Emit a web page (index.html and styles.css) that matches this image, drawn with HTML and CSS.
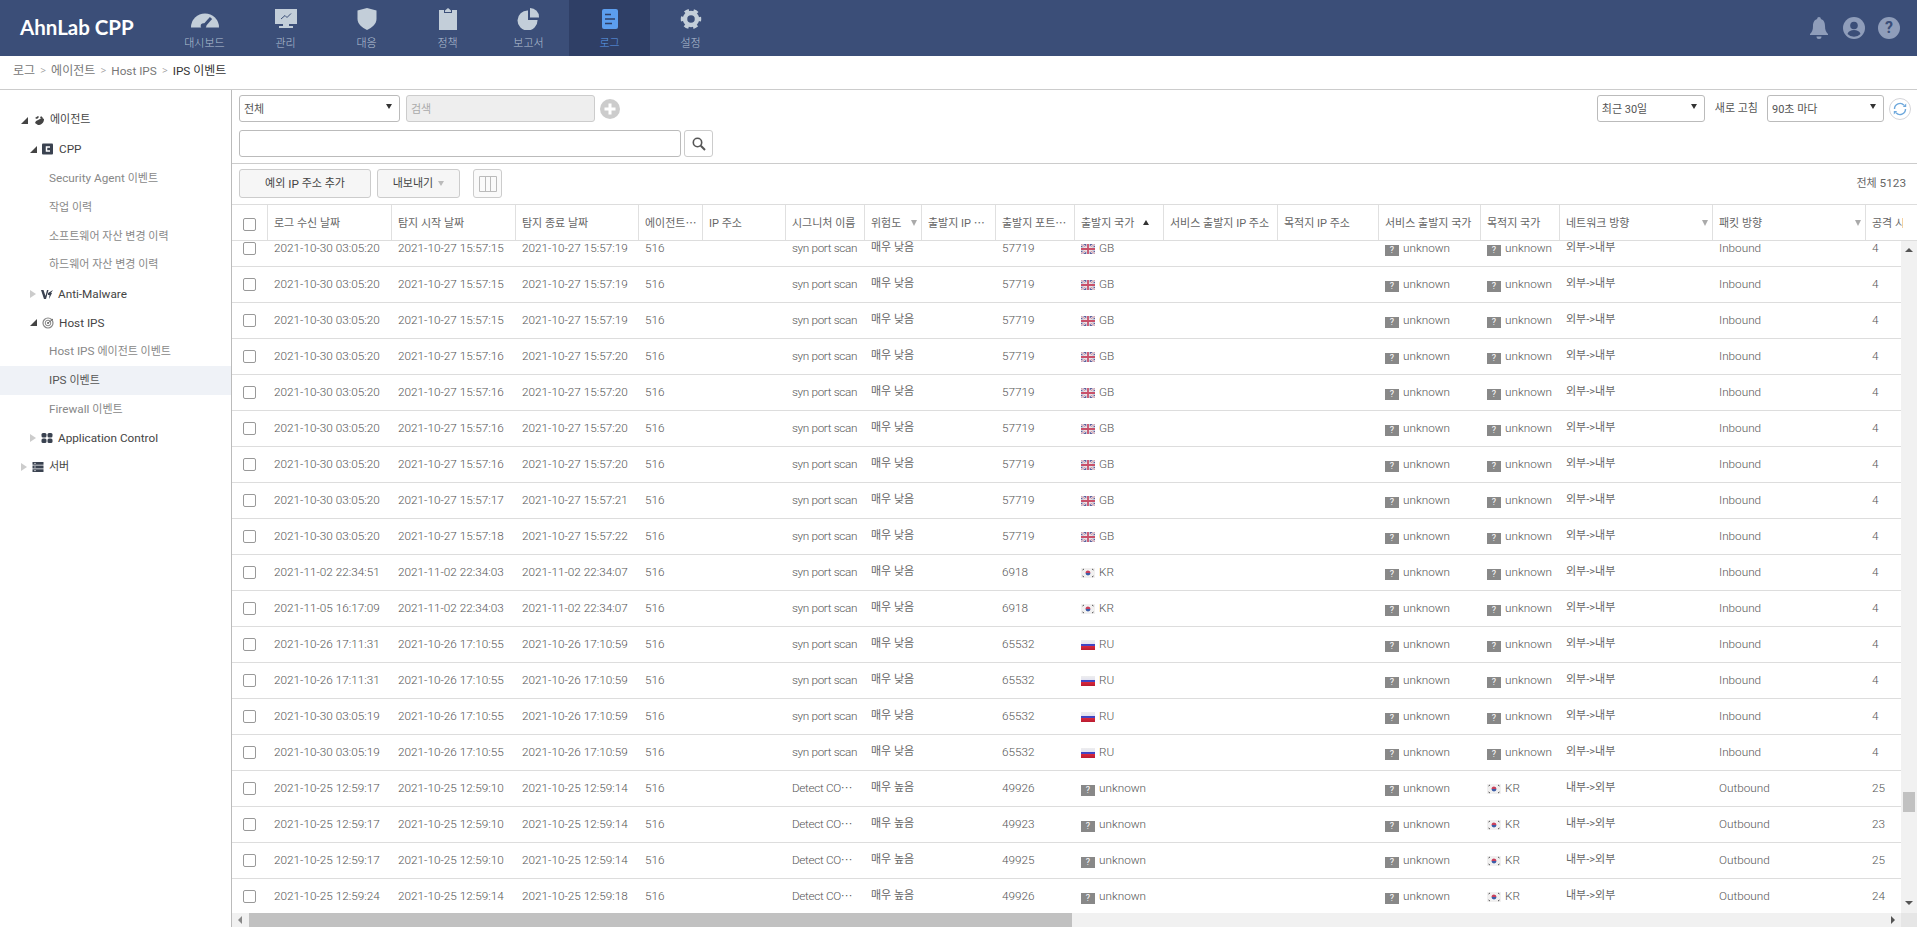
FILE: index.html
```html
<!DOCTYPE html>
<html lang="ko">
<head>
<meta charset="utf-8">
<title>AhnLab CPP</title>
<link rel="stylesheet" href="styles.css">
</head>
<body>
<svg class="defs" width="0" height="0">
<symbol id="gb" viewBox="0 0 14 10"><rect width="14" height="10" fill="#5a5f9c"/><path d="M0 0L14 10M14 0L0 10" stroke="#e6dfe6" stroke-width="2.4"/><path d="M0 0L14 10M14 0L0 10" stroke="#d08a98" stroke-width=".8"/><path d="M7 0V10M0 5H14" stroke="#eee" stroke-width="3.4"/><path d="M7 0V10M0 5H14" stroke="#c8506a" stroke-width="1.8"/></symbol>
<symbol id="kr" viewBox="0 0 14 10"><rect width="14" height="10" fill="#f1f0f0"/><path d="M4.500 5a2.500 2.500 0 0 1 5 0z" fill="#c9405c"/><path d="M4.500 5a2.500 2.500 0 0 0 5 0z" fill="#3c5da8"/><path d="M1.500 2L3 1M1.500 8L3 9M11 1L12.500 2M11 9L12.500 8" stroke="#555" stroke-width="1"/></symbol>
<linearGradient id="rug" x1="0" y1="0" x2="0" y2="1"><stop offset="0" stop-color="#eee"/><stop offset=".36" stop-color="#e4e4f0"/><stop offset=".37" stop-color="#3a42c0"/><stop offset=".63" stop-color="#4a4ac4"/><stop offset=".64" stop-color="#d8283c"/><stop offset="1" stop-color="#b81c30"/></linearGradient>
<symbol id="ru" viewBox="0 0 14 10"><rect width="14" height="10" fill="url(#rug)"/></symbol>
</svg>
<header class="top">
  <div class="logo">AhnLab CPP</div>
  <nav class="nav">
    <a class="nav-item"><svg class="nav-ic" viewBox="0 0 30 22"><path fill="#c3ced9" d="M1 19.500A14 14 0 0 1 29 19.500H8z"/><path d="M13 19L21 10" stroke="#3b4e78" stroke-width="3"/><circle cx="13.500" cy="18" r="2.800" fill="#3b4e78"/></svg><span>대시보드</span></a>
    <a class="nav-item"><svg class="nav-ic" viewBox="0 0 30 22"><path fill="#c3ced9" d="M4 1H26V16H18V18H22V20H8V18H12V16H4Z"/><path fill="none" stroke="#3b4e78" d="M10 11L14 7.500L16 9.500L20 5.500"/></svg><span>관리</span></a>
    <a class="nav-item"><svg class="nav-ic" viewBox="0 0 30 22"><path fill="#c3ced9" d="M15 0L24.500 2.500V11C24.500 16 20 19.500 15 22C10 19.500 5.500 16 5.500 11V2.500Z"/></svg><span>대응</span></a>
    <a class="nav-item"><svg class="nav-ic" viewBox="0 0 30 22"><path fill="#c3ced9" d="M6 2H11V5H19V2H24V22H6Z"/><path fill="#c3ced9" d="M12 2.500L15 0L18 2.500V4H12Z"/></svg><span>정책</span></a>
    <a class="nav-item"><svg class="nav-ic" viewBox="0 0 30 22"><path fill="#c3ced9" d="M14 2.500V12H23.500A10 10 0 1 1 14 2.500Z"/><path fill="#c3ced9" d="M16 0A9 9 0 0 1 25 9.500H16Z"/></svg><span>보고서</span></a>
    <a class="nav-item on"><svg class="nav-ic" viewBox="0 0 30 22"><rect x="7" y="1" width="16" height="20" rx="2" fill="#5c9eef"/><path d="M10 6.500H16M10 11H20M10 15.500H17" stroke="#2f3f66" stroke-width="1.600"/></svg><span>로그</span></a>
    <a class="nav-item"><svg class="nav-ic" viewBox="0 0 30 22"><circle cx="15" cy="11" r="6" fill="none" stroke="#c3ced9" stroke-width="4.500"/><circle cx="15" cy="11" r="8.500" fill="none" stroke="#c3ced9" stroke-width="3.500" stroke-dasharray="4.400 4.500" stroke-dashoffset="2.200"/></svg><span>설정</span></a>
  </nav>
  <div class="top-ic">
    <svg viewBox="0 0 20 22"><path fill="#8f9dba" d="M10 0a1.800 1.800 0 0 1 1.800 2C15 3 16 6 16 9c0 4 1 6 3 8v1H1v-1c2-2 3-4 3-8 0-3 1-6 4.200-7A1.800 1.800 0 0 1 10 0ZM7.500 19.500h5a2.500 2.500 0 0 1-5 0Z"/></svg>
    <svg viewBox="0 0 22 22"><circle cx="11" cy="11" r="11" fill="#8f9dba"/><circle cx="11" cy="8.500" r="3.800" fill="#3b4e78"/><path fill="#3b4e78" d="M4.500 17c1-3 3.500-4 6.500-4s5.500 1 6.500 4a9 9 0 0 1-13 0Z"/></svg>
    <span class="help">?</span>
  </div>
</header>
<div class="crumb"><span class="ko">로그</span><i class="sep">&gt;</i><span class="ko">에이전트</span><i class="sep">&gt;</i><span>Host IPS</span><i class="sep">&gt;</i><b>IPS <span class="ko">이벤트</span></b></div>
<div class="content">
  <aside class="side">
    <div class="t l0"><i class="ar open"></i><svg class="ti" viewBox="0 0 12 12"><path d="M2 4l3-2 1 1-2 2zM8 2l2 2-1 1-2-1zM3 7l6-3 2 1c0 4-3 6-6 6L2 9z" fill="#444"/></svg><span class="ko dk">에이전트</span></div>
    <div class="t l1"><i class="ar open"></i><svg class="ti" viewBox="0 0 12 12"><rect width="11" height="11" y=".5" rx="1" fill="#3a4250"/><path d="M8 4H4.500v4H8" fill="none" stroke="#fff" stroke-width="1.500"/></svg><span class="dk">CPP</span></div>
    <div class="t leaf">Security Agent <span class="ko">이벤트</span></div>
    <div class="t leaf"><span class="ko">작업 이력</span></div>
    <div class="t leaf"><span class="ko">소프트웨어 자산 변경 이력</span></div>
    <div class="t leaf"><span class="ko">하드웨어 자산 변경 이력</span></div>
    <div class="t l1"><i class="ar"></i><svg class="ti" viewBox="0 0 12 12"><path d="M0 2h2.500L4.500 8 6 2h1.500L5 11H3zM7 5l5-3-2 3 1 0-3 6 .5-4H7z" fill="#3a4250"/></svg><span class="dk">Anti-Malware</span></div>
    <div class="t l1"><i class="ar open"></i><svg class="ti" viewBox="0 0 12 12"><circle cx="6" cy="6" r="5" fill="none" stroke="#888" stroke-width="1.200"/><circle cx="6" cy="6" r="2.800" fill="none" stroke="#888"/><circle cx="6" cy="6" r="1" fill="#666"/><path d="M6 6l5-4" stroke="#666"/></svg><span class="dk">Host IPS</span></div>
    <div class="t leaf">Host IPS <span class="ko">에이전트 이벤트</span></div>
    <div class="t leaf cur">IPS <span class="ko">이벤트</span></div>
    <div class="t leaf">Firewall <span class="ko">이벤트</span></div>
    <div class="t l1"><i class="ar"></i><svg class="ti" viewBox="0 0 12 12"><rect x=".5" y="1" width="5" height="4.500" rx="1.500" fill="#3a4250"/><rect x="6.500" y="1" width="5" height="4.500" rx="1.500" fill="#3a4250"/><rect x=".5" y="6.500" width="5" height="4.500" rx="1.500" fill="#3a4250"/><rect x="6.500" y="6.500" width="5" height="4.500" rx="1.500" fill="#3a4250"/></svg><span class="dk">Application Control</span></div>
    <div class="t l0"><i class="ar"></i><svg class="ti" viewBox="0 0 12 12"><path d="M.5 1h11v2.800H.5zM.5 4.600h11v2.800H.5zM.5 8.200h11V11H.5z" fill="#3a4250"/><path d="M2 2.400h2M2 6h2M2 9.600h2" stroke="#fff" stroke-width=".6"/></svg><span class="ko dk">서버</span></div>
  </aside>
  <main class="main">
    <section class="bar1">
      <div class="bar-row">
        <div class="sel w-all"><span class="ko">전체</span><i class="caret"></i></div>
        <div class="inp off"><span class="ko">검색</span></div>
        <span class="plus"><svg viewBox="0 0 20 20"><circle cx="10" cy="10" r="10" fill="#ccc"/><path d="M10 4.500v11M4.500 10h11" stroke="#fff" stroke-width="3"/></svg></span>
        <div class="right">
          <div class="sel w-days"><span class="ko">최근 30일</span><i class="caret"></i></div>
          <label class="lbl ko">새로 고침</label>
          <div class="sel w-int"><span class="ko">90초 마다</span><i class="caret"></i></div>
          <span class="refresh"><svg viewBox="0 0 22 22"><circle cx="11" cy="11" r="10.500" fill="#fff" stroke="#d4d4d8"/><path d="M5.500 11a5.500 5.500 0 0 1 9.500-3.800" fill="none" stroke="#6ea8dc" stroke-width="1.400"/><path d="M16.500 11a5.500 5.500 0 0 1-9.500 3.800" fill="none" stroke="#6ea8dc" stroke-width="1.400"/><path d="M13.800 9H17.200V5.600zM8.200 13H4.800V16.400z" fill="#6ea8dc"/></svg></span>
        </div>
      </div>
      <div class="bar-row">
        <div class="inp wide"></div>
        <span class="sbtn"><svg viewBox="0 0 14 14"><circle cx="5.500" cy="5.500" r="4.200" fill="none" stroke="#555" stroke-width="1.600"/><path d="M8.800 8.800L13 13" stroke="#555" stroke-width="2"/></svg></span>
      </div>
    </section>
    <section class="bar2">
      <button class="btn b-ip"><span class="ko">예외</span> IP <span class="ko">주소 추가</span></button>
      <button class="btn b-exp"><span class="ko">내보내기</span><i class="caret lt"></i></button>
      <button class="btn b-col"><svg viewBox="0 0 18 16"><path d="M.5 .5h17v15H.5zM6.500 .5v15M11.500 .5v15" fill="none" stroke="#bbb"/></svg></button>
      <div class="total"><span class="ko">전체</span> 5123</div>
    </section>
    <div class="ghead">
      <table class="tb head">
        <colgroup><col><col><col><col><col><col><col><col><col><col><col><col><col><col><col><col><col><col></colgroup>
        <tr><th><i class="cb"></i></th><th>로그 수신 날짜</th><th>탐지 시작 날짜</th><th>탐지 종료 날짜</th><th>에이전트⋯</th><th>IP 주소</th><th>시그니처 이름</th><th class="fi">위험도<i class="flt"></i></th><th>출발지 IP ⋯</th><th>출발지 포트⋯</th><th>출발지 국가<i class="sort"></i></th><th>서비스 출발지 IP 주소</th><th>목적지 IP 주소</th><th>서비스 출발지 국가</th><th>목적지 국가</th><th class="fi">네트워크 방향<i class="flt"></i></th><th class="fi">패킷 방향<i class="flt"></i></th><th>공격 시도</th></tr>
      </table>
    </div>
    <div class="gbody">
      <div class="gview">
        <table class="tb body">
          <colgroup><col><col><col><col><col><col><col><col><col><col><col><col><col><col><col><col><col><col></colgroup>
          <tr><td><i class="cb"></i></td><td>2021-10-30 03:05:20</td><td>2021-10-27 15:57:15</td><td>2021-10-27 15:57:19</td><td>516</td><td></td><td>syn port scan</td><td class="ko">매우 낮음</td><td></td><td>57719</td><td><svg class="fl"><use href="#gb"/></svg>GB</td><td></td><td></td><td><b class="q">?</b>unknown</td><td><b class="q">?</b>unknown</td><td class="ko">외부-&gt;내부</td><td>Inbound</td><td>4</td></tr>
          <tr><td><i class="cb"></i></td><td>2021-10-30 03:05:20</td><td>2021-10-27 15:57:15</td><td>2021-10-27 15:57:19</td><td>516</td><td></td><td>syn port scan</td><td class="ko">매우 낮음</td><td></td><td>57719</td><td><svg class="fl"><use href="#gb"/></svg>GB</td><td></td><td></td><td><b class="q">?</b>unknown</td><td><b class="q">?</b>unknown</td><td class="ko">외부-&gt;내부</td><td>Inbound</td><td>4</td></tr>
          <tr><td><i class="cb"></i></td><td>2021-10-30 03:05:20</td><td>2021-10-27 15:57:15</td><td>2021-10-27 15:57:19</td><td>516</td><td></td><td>syn port scan</td><td class="ko">매우 낮음</td><td></td><td>57719</td><td><svg class="fl"><use href="#gb"/></svg>GB</td><td></td><td></td><td><b class="q">?</b>unknown</td><td><b class="q">?</b>unknown</td><td class="ko">외부-&gt;내부</td><td>Inbound</td><td>4</td></tr>
          <tr><td><i class="cb"></i></td><td>2021-10-30 03:05:20</td><td>2021-10-27 15:57:16</td><td>2021-10-27 15:57:20</td><td>516</td><td></td><td>syn port scan</td><td class="ko">매우 낮음</td><td></td><td>57719</td><td><svg class="fl"><use href="#gb"/></svg>GB</td><td></td><td></td><td><b class="q">?</b>unknown</td><td><b class="q">?</b>unknown</td><td class="ko">외부-&gt;내부</td><td>Inbound</td><td>4</td></tr>
          <tr><td><i class="cb"></i></td><td>2021-10-30 03:05:20</td><td>2021-10-27 15:57:16</td><td>2021-10-27 15:57:20</td><td>516</td><td></td><td>syn port scan</td><td class="ko">매우 낮음</td><td></td><td>57719</td><td><svg class="fl"><use href="#gb"/></svg>GB</td><td></td><td></td><td><b class="q">?</b>unknown</td><td><b class="q">?</b>unknown</td><td class="ko">외부-&gt;내부</td><td>Inbound</td><td>4</td></tr>
          <tr><td><i class="cb"></i></td><td>2021-10-30 03:05:20</td><td>2021-10-27 15:57:16</td><td>2021-10-27 15:57:20</td><td>516</td><td></td><td>syn port scan</td><td class="ko">매우 낮음</td><td></td><td>57719</td><td><svg class="fl"><use href="#gb"/></svg>GB</td><td></td><td></td><td><b class="q">?</b>unknown</td><td><b class="q">?</b>unknown</td><td class="ko">외부-&gt;내부</td><td>Inbound</td><td>4</td></tr>
          <tr><td><i class="cb"></i></td><td>2021-10-30 03:05:20</td><td>2021-10-27 15:57:16</td><td>2021-10-27 15:57:20</td><td>516</td><td></td><td>syn port scan</td><td class="ko">매우 낮음</td><td></td><td>57719</td><td><svg class="fl"><use href="#gb"/></svg>GB</td><td></td><td></td><td><b class="q">?</b>unknown</td><td><b class="q">?</b>unknown</td><td class="ko">외부-&gt;내부</td><td>Inbound</td><td>4</td></tr>
          <tr><td><i class="cb"></i></td><td>2021-10-30 03:05:20</td><td>2021-10-27 15:57:17</td><td>2021-10-27 15:57:21</td><td>516</td><td></td><td>syn port scan</td><td class="ko">매우 낮음</td><td></td><td>57719</td><td><svg class="fl"><use href="#gb"/></svg>GB</td><td></td><td></td><td><b class="q">?</b>unknown</td><td><b class="q">?</b>unknown</td><td class="ko">외부-&gt;내부</td><td>Inbound</td><td>4</td></tr>
          <tr><td><i class="cb"></i></td><td>2021-10-30 03:05:20</td><td>2021-10-27 15:57:18</td><td>2021-10-27 15:57:22</td><td>516</td><td></td><td>syn port scan</td><td class="ko">매우 낮음</td><td></td><td>57719</td><td><svg class="fl"><use href="#gb"/></svg>GB</td><td></td><td></td><td><b class="q">?</b>unknown</td><td><b class="q">?</b>unknown</td><td class="ko">외부-&gt;내부</td><td>Inbound</td><td>4</td></tr>
          <tr><td><i class="cb"></i></td><td>2021-11-02 22:34:51</td><td>2021-11-02 22:34:03</td><td>2021-11-02 22:34:07</td><td>516</td><td></td><td>syn port scan</td><td class="ko">매우 낮음</td><td></td><td>6918</td><td><svg class="fl"><use href="#kr"/></svg>KR</td><td></td><td></td><td><b class="q">?</b>unknown</td><td><b class="q">?</b>unknown</td><td class="ko">외부-&gt;내부</td><td>Inbound</td><td>4</td></tr>
          <tr><td><i class="cb"></i></td><td>2021-11-05 16:17:09</td><td>2021-11-02 22:34:03</td><td>2021-11-02 22:34:07</td><td>516</td><td></td><td>syn port scan</td><td class="ko">매우 낮음</td><td></td><td>6918</td><td><svg class="fl"><use href="#kr"/></svg>KR</td><td></td><td></td><td><b class="q">?</b>unknown</td><td><b class="q">?</b>unknown</td><td class="ko">외부-&gt;내부</td><td>Inbound</td><td>4</td></tr>
          <tr><td><i class="cb"></i></td><td>2021-10-26 17:11:31</td><td>2021-10-26 17:10:55</td><td>2021-10-26 17:10:59</td><td>516</td><td></td><td>syn port scan</td><td class="ko">매우 낮음</td><td></td><td>65532</td><td><svg class="fl"><use href="#ru"/></svg>RU</td><td></td><td></td><td><b class="q">?</b>unknown</td><td><b class="q">?</b>unknown</td><td class="ko">외부-&gt;내부</td><td>Inbound</td><td>4</td></tr>
          <tr><td><i class="cb"></i></td><td>2021-10-26 17:11:31</td><td>2021-10-26 17:10:55</td><td>2021-10-26 17:10:59</td><td>516</td><td></td><td>syn port scan</td><td class="ko">매우 낮음</td><td></td><td>65532</td><td><svg class="fl"><use href="#ru"/></svg>RU</td><td></td><td></td><td><b class="q">?</b>unknown</td><td><b class="q">?</b>unknown</td><td class="ko">외부-&gt;내부</td><td>Inbound</td><td>4</td></tr>
          <tr><td><i class="cb"></i></td><td>2021-10-30 03:05:19</td><td>2021-10-26 17:10:55</td><td>2021-10-26 17:10:59</td><td>516</td><td></td><td>syn port scan</td><td class="ko">매우 낮음</td><td></td><td>65532</td><td><svg class="fl"><use href="#ru"/></svg>RU</td><td></td><td></td><td><b class="q">?</b>unknown</td><td><b class="q">?</b>unknown</td><td class="ko">외부-&gt;내부</td><td>Inbound</td><td>4</td></tr>
          <tr><td><i class="cb"></i></td><td>2021-10-30 03:05:19</td><td>2021-10-26 17:10:55</td><td>2021-10-26 17:10:59</td><td>516</td><td></td><td>syn port scan</td><td class="ko">매우 낮음</td><td></td><td>65532</td><td><svg class="fl"><use href="#ru"/></svg>RU</td><td></td><td></td><td><b class="q">?</b>unknown</td><td><b class="q">?</b>unknown</td><td class="ko">외부-&gt;내부</td><td>Inbound</td><td>4</td></tr>
          <tr><td><i class="cb"></i></td><td>2021-10-25 12:59:17</td><td>2021-10-25 12:59:10</td><td>2021-10-25 12:59:14</td><td>516</td><td></td><td>Detect CO⋯</td><td class="ko">매우 높음</td><td></td><td>49926</td><td><b class="q">?</b>unknown</td><td></td><td></td><td><b class="q">?</b>unknown</td><td><svg class="fl"><use href="#kr"/></svg>KR</td><td class="ko">내부-&gt;외부</td><td>Outbound</td><td>25</td></tr>
          <tr><td><i class="cb"></i></td><td>2021-10-25 12:59:17</td><td>2021-10-25 12:59:10</td><td>2021-10-25 12:59:14</td><td>516</td><td></td><td>Detect CO⋯</td><td class="ko">매우 높음</td><td></td><td>49923</td><td><b class="q">?</b>unknown</td><td></td><td></td><td><b class="q">?</b>unknown</td><td><svg class="fl"><use href="#kr"/></svg>KR</td><td class="ko">내부-&gt;외부</td><td>Outbound</td><td>23</td></tr>
          <tr><td><i class="cb"></i></td><td>2021-10-25 12:59:17</td><td>2021-10-25 12:59:10</td><td>2021-10-25 12:59:14</td><td>516</td><td></td><td>Detect CO⋯</td><td class="ko">매우 높음</td><td></td><td>49925</td><td><b class="q">?</b>unknown</td><td></td><td></td><td><b class="q">?</b>unknown</td><td><svg class="fl"><use href="#kr"/></svg>KR</td><td class="ko">내부-&gt;외부</td><td>Outbound</td><td>25</td></tr>
          <tr><td><i class="cb"></i></td><td>2021-10-25 12:59:24</td><td>2021-10-25 12:59:14</td><td>2021-10-25 12:59:18</td><td>516</td><td></td><td>Detect CO⋯</td><td class="ko">매우 높음</td><td></td><td>49926</td><td><b class="q">?</b>unknown</td><td></td><td></td><td><b class="q">?</b>unknown</td><td><svg class="fl"><use href="#kr"/></svg>KR</td><td class="ko">내부-&gt;외부</td><td>Outbound</td><td>24</td></tr>
        </table>
      </div>
      <div class="vbar"><i class="tri up"></i><i class="vthumb"></i><i class="tri down"></i></div>
    </div>
    <div class="hbar"><i class="tri left"></i><i class="hthumb"></i><i class="tri right"></i><i class="corner"></i></div>
  </main>
</div>
</body>
</html>
```
FILE: styles.css
```css
* { box-sizing: border-box; }
html, body { height: 100%; }
body { margin: 0; height: 927px; overflow: hidden; display: flex; flex-direction: column; background: #fff; color: #666; font: 300 11.75px/16px Roboto, "Noto Sans CJK KR", sans-serif; }
i { font-style: normal; display: block; }
.defs { position: absolute; }
.ko { font-size: 11px; }

.top { height: 56px; flex: none; display: flex; align-items: stretch; background: #3b4e78; }
.logo { width: 164px; flex: none; padding: 15px 0 0 20px; color: #fff; font: 700 20.5px/24px Lato, sans-serif; }
.nav { display: flex; }
.nav-item { width: 81px; display: flex; flex-direction: column; align-items: center; padding-top: 8px; color: #b4c0d4; font-size: 11px; line-height: 14px; }
.nav-item span { margin-top: 7px; }
.nav-item.on { background: #2f3f66; color: #5c9eef; }
.nav-ic { width: 30px; height: 22px; }
.top-ic { margin-left: auto; display: flex; align-items: center; gap: 13px; padding: 0 17px 0 0; }
.top-ic svg { width: 22px; height: 22px; }
.help { width: 22px; height: 22px; border-radius: 50%; background: #8f9dba; color: #3b4e78; font: 700 16px/22px Roboto, sans-serif; text-align: center; }

.crumb { height: 34px; flex: none; display: flex; align-items: center; padding: 0 0 4px 13px; border-bottom: 1px solid #ccc; color: #777; font-weight: 400; }
.crumb .ko { font-size: 12px; }
.crumb .sep { width: 16px; text-align: center; font-size: 11px; font-weight: 300; color: #999; }
.crumb b { font-weight: 400; color: #333; }

.content { flex: 1; min-height: 0; display: flex; }
.side { width: 232px; flex: none; padding-top: 16px; border-right: 1px solid #bbb; font-weight: 400; }
.t { height: 28.9px; display: flex; align-items: center; color: #888; }
.l0 { padding-left: 21px; }
.l1 { padding-left: 30px; }
.leaf { padding-left: 49px; white-space: pre; display: block; line-height: 28.9px; }
.cur { background: #eff2f7; color: #555; }
.dk { color: #444; }
.ar { width: 0; height: 0; border-style: solid; border-width: 4px 0 4px 6px; border-color: transparent transparent transparent #ccc; }
.ar.open { border-width: 0 0 7px 7px; border-color: transparent transparent #444 transparent; }
.ti { width: 12px; height: 12px; margin: 0 5px 0 5px; flex: none; }

.main { flex: 1; min-width: 0; display: flex; flex-direction: column; }
.bar1 { height: 74px; flex: none; padding: 5px 6px 0 7px; border-bottom: 1px solid #ccc; display: flex; flex-direction: column; gap: 8px; font-weight: 400; }
.bar-row { display: flex; align-items: center; height: 27px; }
.sel, .inp { height: 27px; border: 1px solid #bbb; border-radius: 3px; background: #fff; display: flex; align-items: center; padding: 2px 0 0 4px; color: #555; }
.w-all { width: 161px; }
.off { width: 189px; margin-left: 6px; background: #eee; border-color: #ccc; color: #aaa; }
.plus { width: 20px; height: 20px; margin-left: 5px; }
.plus svg, .refresh svg { display: block; width: 100%; height: 100%; }
.right { margin-left: auto; display: flex; align-items: center; }
.w-days { width: 108px; margin-left: -1px; }
.lbl { margin: 0 9px 0 10px; color: #555; }
.w-int { width: 117px; }
.refresh { width: 22px; height: 22px; margin-left: 5px; }
.caret { margin: -6px 7px 0 auto; width: 0; height: 0; border-style: solid; border-width: 5px 3px 0; border-color: #333 transparent transparent; }
.caret.lt { margin: 0 0 0 5px; border-color: #bbb transparent transparent; }
.wide { width: 442px; }
.sbtn { width: 29px; height: 27px; margin-left: 3px; border: 1px solid #ccc; border-radius: 3px; display: flex; align-items: center; justify-content: center; }
.sbtn svg { width: 14px; height: 14px; }

.bar2 { height: 41px; flex: none; padding: 5px 11px 0 7px; border-bottom: 1px solid #ddd; display: flex; align-items: flex-start; font-weight: 400; }
.btn { height: 29px; padding: 0; border: 1px solid #ccc; border-radius: 3px; background: #f6f6f6; color: #444; font: inherit; display: flex; align-items: center; justify-content: center; }
.b-ip { width: 132px; white-space: pre; }
.b-exp { width: 83px; margin-left: 6px; }
.b-col { width: 29px; margin-left: 13px; background: #fafafa; }
.b-col svg { width: 18px; height: 16px; }
.total { margin-left: auto; line-height: 28px; color: #666; white-space: pre; }

.ghead { height: 36px; flex: none; border-bottom: 1px solid #ddd; overflow: hidden; }
.tb { table-layout: fixed; border-collapse: separate; border-spacing: 0; width: 1671px; }
col:nth-child(1) { width: 36px; }
col:nth-child(2), col:nth-child(3) { width: 124px; }
col:nth-child(4) { width: 123px; }
col:nth-child(5) { width: 64px; }
col:nth-child(6) { width: 83px; }
col:nth-child(7) { width: 79px; }
col:nth-child(8) { width: 57px; }
col:nth-child(9) { width: 74px; }
col:nth-child(10) { width: 79px; }
col:nth-child(11) { width: 89px; }
col:nth-child(12) { width: 114px; }
col:nth-child(13) { width: 101px; }
col:nth-child(14) { width: 102px; }
col:nth-child(15) { width: 79px; }
col:nth-child(16), col:nth-child(17) { width: 153px; }
col:nth-child(18) { width: 37px; }
th { height: 35px; padding: 3px 0 0 6px; border-right: 1px solid #e0e0e0; font-size: 11px; font-weight: 400; text-align: left; color: #666; white-space: nowrap; overflow: hidden; position: relative; }
th:last-child { border-right: 0; }
th:first-child { padding: 1px 0 0 11px; }
td { height: 36px; padding: 0 0 2px 6px; border-bottom: 1px solid #ddd; white-space: nowrap; overflow: hidden; color: #555; }
td:first-child { padding-left: 11px; }
td:nth-child(7) { letter-spacing: -.35px; }
td.ko { padding-bottom: 1px; font-weight: 400; color: #666; }
.cb { width: 13px; height: 13px; border: 1px solid #999; border-radius: 2px; background: #fff; margin-top: 2px; }
.flt { position: absolute; right: 4px; top: 15px; width: 0; height: 0; border-style: solid; border-width: 6px 3px 0; border-color: #aaa transparent transparent; }
.sort { position: absolute; right: 14px; top: 15px; width: 0; height: 0; border-style: solid; border-width: 0 3px 5px; border-color: transparent transparent #333; }
.fl { width: 14px; height: 10px; margin-right: 4px; vertical-align: -2px; }
.q { display: inline-block; width: 14px; height: 11px; margin-right: 4px; background: #888; color: #fff; font: 400 9px/11px Roboto, sans-serif; text-align: center; vertical-align: -1px; }

.gbody { flex: 1; min-height: 0; display: flex; }
.gview { flex: 1; min-width: 0; overflow: hidden; }
.body { margin-top: -10px; }
.vbar { width: 16px; flex: none; background: #f1f1f1; display: flex; flex-direction: column; align-items: center; padding: 7px 0 8px; }
.vthumb { width: 12px; height: 20px; margin-top: 540px; background: #c1c1c1; }
.tri { width: 0; height: 0; border-style: solid; }
.up { border-width: 0 4px 4px; border-color: transparent transparent #555; }
.down { margin-top: auto; border-width: 4px 4px 0; border-color: #555 transparent transparent; }
.hbar { height: 14px; flex: none; background: #f1f1f1; display: flex; align-items: center; }
.left { margin-left: 6px; border-width: 4px 4px 4px 0; border-color: transparent #888 transparent transparent; }
.hthumb { width: 823px; height: 14px; margin-left: 7px; background: #c1c1c1; }
.tri.right { margin: 0 6px 0 auto; border-width: 4px 0 4px 4px; border-color: transparent transparent transparent #555; }
.corner { width: 16px; height: 14px; background: #e6e6e6; }
```
